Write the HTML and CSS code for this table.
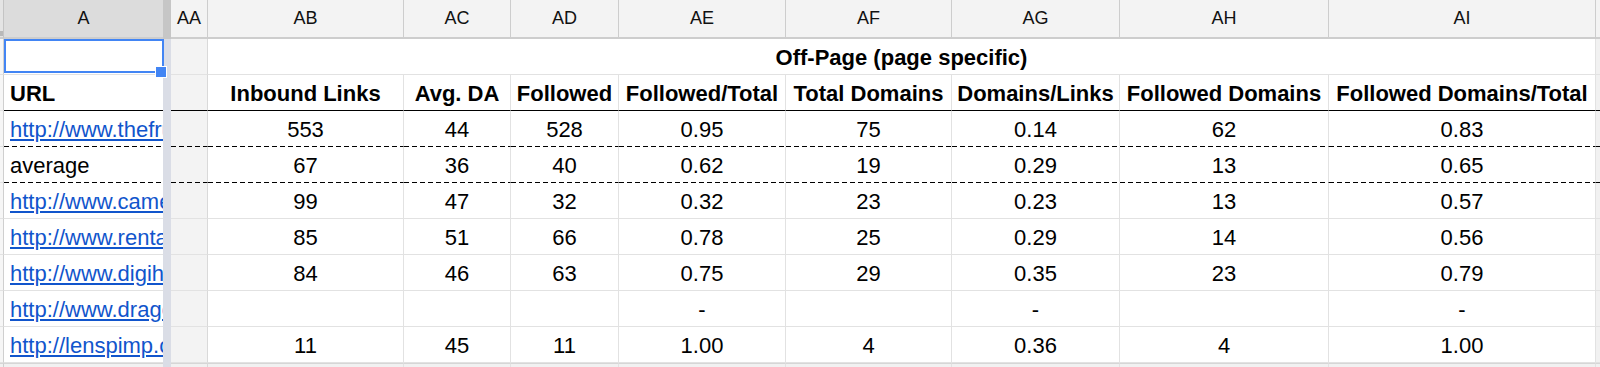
FILE: index.html
```html
<!DOCTYPE html>
<html>
<head>
<meta charset="utf-8">
<title>Sheet</title>
<link rel="stylesheet" href="styles.css">
</head>
<body>
<div class="sheet">
  <div class="row hdr">
    <div class="c stub"></div>
    <div class="c selcol">A</div>
    <div class="c dv"></div>
    <div class="c aa">AA</div>
    <div class="c">AB</div>
    <div class="c">AC</div>
    <div class="c">AD</div>
    <div class="c">AE</div>
    <div class="c">AF</div>
    <div class="c">AG</div>
    <div class="c">AH</div>
    <div class="c">AI</div>
    <div class="c rest"></div>
  </div>

  <div class="row">
    <div class="c stub"></div>
    <div class="c a active"><span class="selbox"></span><span class="handle"></span></div>
    <div class="c dv"></div>
    <div class="c aa"></div>
    <div class="c merged b">Off-Page (page specific)</div>
    <div class="c rest"></div>
  </div>

  <div class="row solid">
    <div class="c stub"></div>
    <div class="c a b">URL</div>
    <div class="c dv"></div>
    <div class="c aa"></div>
    <div class="c b">Inbound Links</div>
    <div class="c b">Avg. DA</div>
    <div class="c b">Followed</div>
    <div class="c b">Followed/Total</div>
    <div class="c b">Total Domains</div>
    <div class="c b">Domains/Links</div>
    <div class="c b">Followed Domains</div>
    <div class="c b">Followed Domains/Total</div>
    <div class="c rest"></div>
  </div>

  <div class="row dash">
    <div class="c stub"></div>
    <div class="c a"><a class="link">http://www.thefrugal</a></div>
    <div class="c dv"></div>
    <div class="c aa"></div>
    <div class="c">553</div>
    <div class="c">44</div>
    <div class="c">528</div>
    <div class="c">0.95</div>
    <div class="c">75</div>
    <div class="c">0.14</div>
    <div class="c">62</div>
    <div class="c">0.83</div>
    <div class="c rest"></div>
  </div>

  <div class="row dash">
    <div class="c stub"></div>
    <div class="c a">average</div>
    <div class="c dv"></div>
    <div class="c aa"></div>
    <div class="c">67</div>
    <div class="c">36</div>
    <div class="c">40</div>
    <div class="c">0.62</div>
    <div class="c">19</div>
    <div class="c">0.29</div>
    <div class="c">13</div>
    <div class="c">0.65</div>
    <div class="c rest"></div>
  </div>

  <div class="row">
    <div class="c stub"></div>
    <div class="c a"><a class="link">http://www.camera</a></div>
    <div class="c dv"></div>
    <div class="c aa"></div>
    <div class="c">99</div>
    <div class="c">47</div>
    <div class="c">32</div>
    <div class="c">0.32</div>
    <div class="c">23</div>
    <div class="c">0.23</div>
    <div class="c">13</div>
    <div class="c">0.57</div>
    <div class="c rest"></div>
  </div>

  <div class="row">
    <div class="c stub"></div>
    <div class="c a"><a class="link">http://www.rental</a></div>
    <div class="c dv"></div>
    <div class="c aa"></div>
    <div class="c">85</div>
    <div class="c">51</div>
    <div class="c">66</div>
    <div class="c">0.78</div>
    <div class="c">25</div>
    <div class="c">0.29</div>
    <div class="c">14</div>
    <div class="c">0.56</div>
    <div class="c rest"></div>
  </div>

  <div class="row">
    <div class="c stub"></div>
    <div class="c a"><a class="link">http://www.digihelp</a></div>
    <div class="c dv"></div>
    <div class="c aa"></div>
    <div class="c">84</div>
    <div class="c">46</div>
    <div class="c">63</div>
    <div class="c">0.75</div>
    <div class="c">29</div>
    <div class="c">0.35</div>
    <div class="c">23</div>
    <div class="c">0.79</div>
    <div class="c rest"></div>
  </div>

  <div class="row">
    <div class="c stub"></div>
    <div class="c a"><a class="link">http://www.dragon</a></div>
    <div class="c dv"></div>
    <div class="c aa"></div>
    <div class="c"></div>
    <div class="c"></div>
    <div class="c"></div>
    <div class="c">-</div>
    <div class="c"></div>
    <div class="c">-</div>
    <div class="c"></div>
    <div class="c">-</div>
    <div class="c rest"></div>
  </div>

  <div class="row">
    <div class="c stub"></div>
    <div class="c a"><a class="link">http://lenspimp.com</a></div>
    <div class="c dv"></div>
    <div class="c aa"></div>
    <div class="c">11</div>
    <div class="c">45</div>
    <div class="c">11</div>
    <div class="c">1.00</div>
    <div class="c">4</div>
    <div class="c">0.36</div>
    <div class="c">4</div>
    <div class="c">1.00</div>
    <div class="c rest"></div>
  </div>

  <div class="row tail">
    <div class="c stub"></div>
    <div class="c a"></div>
    <div class="c dv"></div>
    <div class="c aa"></div>
    <div class="c"></div>
    <div class="c"></div>
    <div class="c"></div>
    <div class="c"></div>
    <div class="c"></div>
    <div class="c"></div>
    <div class="c"></div>
    <div class="c"></div>
    <div class="c rest"></div>
  </div>
</div>
</body>
</html>
```

FILE: styles.css
```css
* {
  box-sizing: border-box;
  margin: 0;
  padding: 0;
}

html, body {
  margin: 0;
  background: #ffffff;
  overflow: hidden;
}

body {
  font-family: "Liberation Sans", Arial, sans-serif;
}

.sheet {
  display: grid;
  grid-template-columns: 4px 159px 8px 37px 196px 107px 108px 167px 166px 168px 209px 267px 1fr;
  grid-template-rows: 39px;
  grid-auto-rows: 36px;
}

.row {
  display: contents;
}

.c {
  display: flex;
  align-items: center;
  justify-content: center;
  padding-top: 2px;
  border-right: 1px solid #e2e2e2;
  border-bottom: 1px solid #e2e2e2;
  font-size: 22px;
  color: #000;
  white-space: nowrap;
  overflow: hidden;
  background-clip: border-box;
  background-origin: border-box;
}

.b {
  font-weight: bold;
}

/* column header row */
.hdr .c {
  background-color: #f3f3f3;
  border-right-color: #cdcdcd;
  border-bottom: 2px solid #cdcdcd;
  font-size: 18px;
  color: #111;
  padding-top: 0;
}

.hdr .c.selcol {
  background-color: #dcdcdc;
  border-right: none;
}

.hdr .c.stub {
  background: linear-gradient(#e4e4e4 0 31px, #b9b9b9 31px 36px, #e4e4e4 36px);
  border-right: 1px solid #c4c4c4;
}

.stub {
  background-color: #f6f6f6;
  border-right: 1px solid #cfcfcf;
  border-bottom: 1px solid #e2e2e2;
}

/* column A (frozen) */
.a {
  justify-content: flex-start;
  padding-left: 6px;
  border-right: none;
}

.a.active {
  position: relative;
  overflow: visible;
  z-index: 2;
}

.selbox {
  position: absolute;
  left: 0;
  top: 0;
  width: 160px;
  height: 34px;
  border: 2px solid #4285f4;
}

.handle {
  position: absolute;
  left: 151px;
  top: 27px;
  width: 12px;
  height: 12px;
  background: #4285f4;
  border: 1px solid #ffffff;
}

.link {
  color: #1155cc;
  text-decoration: underline;
  text-underline-offset: 2px;
}

/* frozen divider */
.dv {
  background-color: #dadde6;
  border: none;
}

.hdr .c.dv {
  background-color: #c6c6c6;
  border: none;
}

/* AA column */
.aa {
  background-color: #f3f3f3;
  border-right-color: #d9d9d9;
}

.merged {
  grid-column: span 8;
}

.rest {
  background-color: #f1f1f1;
  border-right: none;
}

/* row separators */
.row.solid .c {
  border-bottom-color: #000;
}

.row.dash .c {
  border-bottom-color: transparent;
  background-image: repeating-linear-gradient(90deg, #000 0 5px, transparent 5px 8px);
  background-size: 100% 1px;
  background-position: left bottom;
  background-repeat: no-repeat;
}

.row.solid .c.stub,
.row.dash .c.stub {
  border-bottom-color: #e2e2e2;
  background-image: none;
}

.row.solid .c.dv,
.row.dash .c.dv {
  background-image: none;
}

.row.tail .c {
  background-color: #f1f1f1;
  border-top: 1px solid #d6d6d6;
}

.row.tail .c.dv {
  background-color: #dadde6;
  border-top: none;
}
```
